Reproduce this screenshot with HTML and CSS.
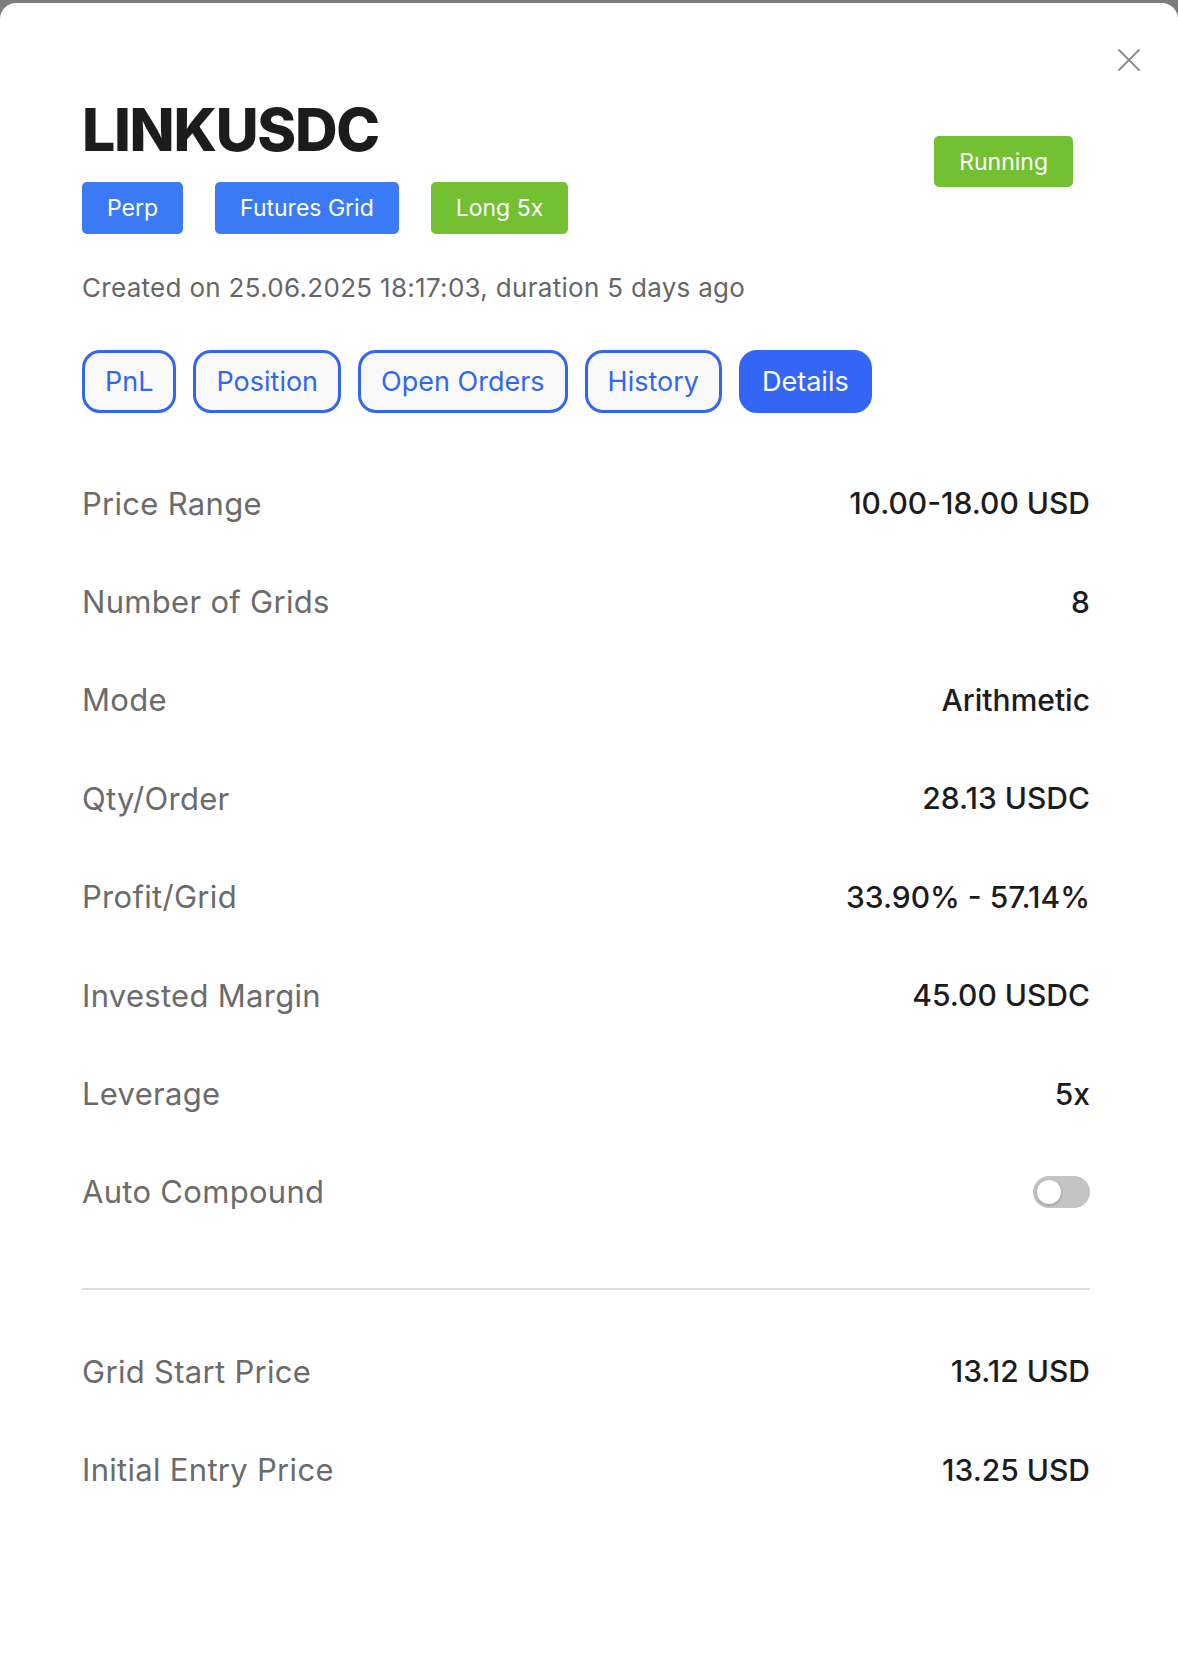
FILE: index.html
```html
<!DOCTYPE html>
<html lang="en">
<head>
  <meta charset="UTF-8">
  <meta name="viewport" content="width=device-width, initial-scale=1.0">
  <title>LINKUSDC - Details</title>
  <link rel="stylesheet" href="styles.css">
</head>
<body>
  <div class="modal">
    <button class="close" aria-label="Close">
      <svg width="24" height="24" viewBox="0 0 24 24" fill="none" stroke="#8a8a8a" stroke-width="1.8" stroke-linecap="round">
        <path d="M2 2L22 22M22 2L2 22"/>
      </svg>
    </button>

    <div class="header">
      <div class="header-left">
        <h1>LINKUSDC</h1>
        <div class="tags">
          <span class="tag tag-blue">Perp</span>
          <span class="tag tag-blue">Futures Grid</span>
          <span class="tag tag-green">Long 5x</span>
        </div>
      </div>
      <span class="tag tag-green status">Running</span>
    </div>

    <p class="created">Created on 25.06.2025 18:17:03, duration 5 days ago</p>

    <div class="tabs">
      <button class="tab">PnL</button>
      <button class="tab">Position</button>
      <button class="tab">Open Orders</button>
      <button class="tab">History</button>
      <button class="tab active">Details</button>
    </div>

    <div class="details">
      <div class="row"><span class="label">Price Range</span><span class="value">10.00-18.00 USD</span></div>
      <div class="row"><span class="label">Number of Grids</span><span class="value">8</span></div>
      <div class="row"><span class="label">Mode</span><span class="value">Arithmetic</span></div>
      <div class="row"><span class="label">Qty/Order</span><span class="value">28.13 USDC</span></div>
      <div class="row"><span class="label">Profit/Grid</span><span class="value">33.90% - 57.14%</span></div>
      <div class="row"><span class="label">Invested Margin</span><span class="value">45.00 USDC</span></div>
      <div class="row"><span class="label">Leverage</span><span class="value">5x</span></div>
      <div class="row">
        <span class="label">Auto Compound</span>
        <span class="toggle"><span class="knob"></span></span>
      </div>
    </div>

    <hr class="divider">

    <div class="details">
      <div class="row"><span class="label">Grid Start Price</span><span class="value">13.12 USD</span></div>
      <div class="row"><span class="label">Initial Entry Price</span><span class="value">13.25 USD</span></div>
    </div>
  </div>
</body>
</html>
```

FILE: styles.css
```css
body {
  margin: 0;
  padding: 0;
  background-color: #7c7c7c;
  font-family: Inter, "Noto Sans", sans-serif;
}

.modal {
  position: relative;
  margin-top: 3px;
  min-height: 1655px;
  box-sizing: border-box;
  padding: 0 88px 0 82px;
  background-color: #fff;
  border-radius: 16px 16px 0 0;
}

.close {
  position: absolute;
  top: 45px;
  right: 37px;
  padding: 0;
  border: none;
  background: none;
  cursor: pointer;
}

.header {
  display: flex;
  justify-content: space-between;
  align-items: flex-start;
  padding-top: 94px;
}

h1 {
  margin: 0;
  font-size: 59px;
  line-height: 66px;
  font-weight: 800;
  color: #1c1c1c;
  letter-spacing: -1.3px;
}

.tags {
  display: flex;
  gap: 32px;
  margin-top: 19px;
}

.tag {
  display: inline-flex;
  align-items: center;
  height: 52px;
  padding: 0 25px;
  border-radius: 5px;
  color: #fff;
  font-size: 23px;
  box-sizing: border-box;
}

.tag-blue {
  background-color: #3b7af7;
}

.tag-green {
  background-color: #73c033;
}

.status {
  margin-top: 39px;
  margin-right: 17px;
  height: 51px;
}

.created {
  margin: 38px 0 0;
  font-size: 26px;
  line-height: 32px;
  letter-spacing: 0.3px;
  color: #666;
}

.tabs {
  display: flex;
  gap: 17px;
  margin-top: 46px;
}

.tab {
  height: 63px;
  padding: 0 20px;
  border: 3px solid #3366f0;
  border-radius: 18px;
  background-color: #f9f9f9;
  color: #3366f0;
  font-family: inherit;
  font-size: 27px;
  cursor: pointer;
}

.tab.active {
  background-color: #3366f6;
  border-color: #3366f6;
  color: #fff;
}

.details {
  margin-top: 41px;
}

.row {
  display: flex;
  justify-content: space-between;
  align-items: center;
  height: 98.4px;
}

.label {
  font-size: 31px;
  letter-spacing: 0.3px;
  color: #6b6b6b;
}

.value {
  font-size: 30px;
  font-weight: 500;
  color: #1c1c1c;
}

.toggle {
  position: relative;
  width: 57px;
  height: 32px;
  border-radius: 16px;
  background-color: #c4c4c4;
}

.knob {
  position: absolute;
  top: 4px;
  left: 4px;
  width: 24px;
  height: 24px;
  border-radius: 50%;
  background-color: #fff;
  box-shadow: 0 1px 3px rgba(0, 0, 0, 0.25);
}

.divider {
  margin: 47px 0 0;
  border: none;
  border-top: 2px solid #dcdcdc;
}

.divider + .details {
  margin-top: 32px;
}
```
